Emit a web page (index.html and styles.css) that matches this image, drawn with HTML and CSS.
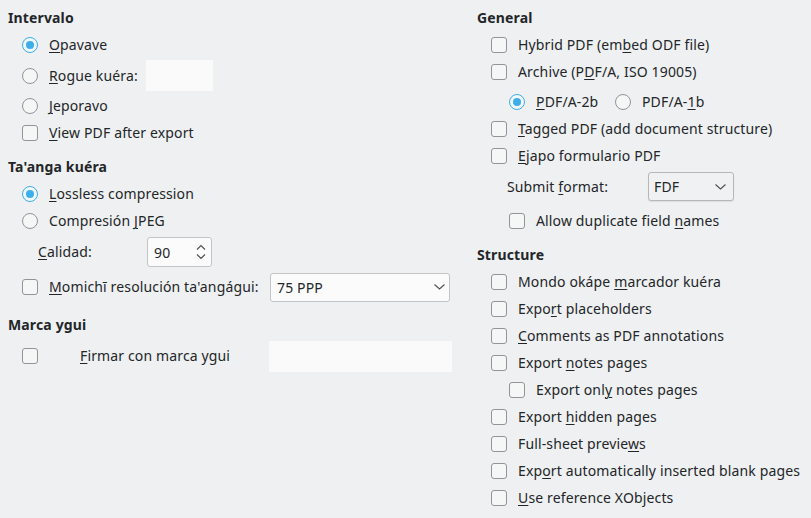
FILE: index.html
```html
<!DOCTYPE html>
<html>
<head>
<meta charset="utf-8">
<link rel="stylesheet" href="styles.css">
</head>
<body>
<div class="dialog">
  <div class="col">
    <section class="group">
      <div class="heading">Intervalo</div>
      <div class="row"><span class="radio checked"></span><span class="text"><u>O</u>pavave</span></div>
      <div class="row row-tall"><span class="radio"></span><span class="text w-rogue"><u>R</u>ogue kuéra:</span><span class="field field-pages"></span></div>
      <div class="row"><span class="radio"></span><span class="text"><u>J</u>eporavo</span></div>
      <div class="row"><span class="check"></span><span class="text"><u>V</u>iew PDF after export</span></div>
    </section>
    <section class="group">
      <div class="heading">Ta'anga kuéra</div>
      <div class="row"><span class="radio checked"></span><span class="text"><u>L</u>ossless compression</span></div>
      <div class="row"><span class="radio"></span><span class="text">Compresión <u>J</u>PEG</span></div>
      <div class="row row-ctl row-label"><span class="text w-calidad"><u>C</u>alidad:</span>
        <span class="spin"><span class="spin-val">90</span>
          <svg class="spin-arrows" width="10" height="16" viewBox="0 0 10 16"><path d="M1 5.5 L5 1.5 L9 5.5 M1 10.5 L5 14.5 L9 10.5" fill="none" stroke="#4d4f51" stroke-width="1.1"/></svg>
        </span>
      </div>
      <div class="row row-ctl"><span class="check"></span><span class="text w-momichi"><u>M</u>omichī resolución ta'angágui:</span>
        <span class="combo combo-res"><span class="combo-val">75 PPP</span>
          <svg class="chev" width="11" height="6" viewBox="0 0 11 6"><path d="M0.5 0.5 L5.5 5 L10.5 0.5" fill="none" stroke="#4d4f51" stroke-width="1.1"/></svg>
        </span>
      </div>
    </section>
    <section class="group">
      <div class="heading">Marca ygui</div>
      <div class="row row-wm"><span class="check"></span><span class="text w-firmar"><u>F</u>irmar con marca ygui</span><span class="field field-wm"></span></div>
    </section>
  </div>
  <div class="col">
    <section class="group">
      <div class="heading">General</div>
      <div class="row"><span class="check"></span><span class="text">Hybrid PDF (em<u>b</u>ed ODF file)</span></div>
      <div class="row"><span class="check"></span><span class="text">Archive (P<u>D</u>F/A, ISO 19005)</span></div>
      <div class="row row-sub row-pdfa"><span class="radio checked"></span><span class="text w-pdfa"><u>P</u>DF/A-2b</span><span class="radio"></span><span class="text">PDF/A-<u>1</u>b</span></div>
      <div class="row"><span class="check"></span><span class="text"><u>T</u>agged PDF (add document structure)</span></div>
      <div class="row"><span class="check"></span><span class="text"><u>E</u>japo formulario PDF</span></div>
      <div class="row row-label row-submit"><span class="text w-submit">Submit <u>f</u>ormat:</span>
        <span class="combo combo-btn"><span class="combo-val">FDF</span>
          <svg class="chev" width="11" height="6" viewBox="0 0 11 6"><path d="M0.5 0.5 L5.5 5 L10.5 0.5" fill="none" stroke="#4d4f51" stroke-width="1.1"/></svg>
        </span>
      </div>
      <div class="row row-sub row-allow"><span class="check"></span><span class="text">Allow duplicate field <u>n</u>ames</span></div>
    </section>
    <section class="group">
      <div class="heading">Structure</div>
      <div class="row"><span class="check"></span><span class="text">Mondo okápe <u>m</u>arcador kuéra</span></div>
      <div class="row"><span class="check"></span><span class="text">Expo<u>r</u>t placeholders</span></div>
      <div class="row"><span class="check"></span><span class="text"><u>C</u>omments as PDF annotations</span></div>
      <div class="row"><span class="check"></span><span class="text">Export <u>n</u>otes pages</span></div>
      <div class="row row-sub"><span class="check"></span><span class="text">Export onl<u>y</u> notes pages</span></div>
      <div class="row"><span class="check"></span><span class="text">Export <u>h</u>idden pages</span></div>
      <div class="row"><span class="check"></span><span class="text">Full-sheet previe<u>w</u>s</span></div>
      <div class="row"><span class="check"></span><span class="text">Exp<u>o</u>rt automatically inserted blank pages</span></div>
      <div class="row"><span class="check"></span><span class="text"><u>U</u>se reference XObjects</span></div>
    </section>
  </div>
</div>
</body>
</html>
```

FILE: styles.css
```css
html, body {
  margin: 0;
  padding: 0;
}
body {
  width: 811px;
  height: 518px;
  overflow: hidden;
  background: #eff0f1;
  color: #232629;
  font-family: "Noto Sans", "DejaVu Sans", sans-serif;
  font-size: 14px;
  letter-spacing: 0.14px;
}
.dialog {
  display: grid;
  grid-template-columns: 469px 342px;
  padding-top: 8px;
}
.col {
  display: flex;
  flex-direction: column;
}
.group + .group {
  margin-top: 10.5px;
}
.heading {
  height: 20px;
  line-height: 20px;
  margin: 0 0 3.5px 8px;
  font-weight: bold;
}
.row {
  display: flex;
  align-items: center;
  height: 27px;
  padding-left: 22px;
  white-space: nowrap;
}
.row-sub {
  padding-left: 40px;
}
.row-label {
  padding-left: 38px;
}
.row-tall {
  height: 34px;
}
.row-ctl {
  height: 35px;
}
.row-wm {
  height: 35px;
}
.row-pdfa {
  margin-top: 3px;
}
.row-submit {
  height: 34.5px;
}
.row-allow {
  margin-top: 3px;
}
.text {
  line-height: 20px;
}
.text u {
  text-decoration: underline;
  text-decoration-thickness: 1px;
  text-underline-offset: 2px;
}
.radio, .check {
  flex: 0 0 auto;
  box-sizing: border-box;
  width: 16px;
  height: 16px;
  margin-right: 11px;
  border: 1px solid #929496;
  background: #f5f6f6;
  position: relative;
}
.radio {
  border-radius: 50%;
}
.check {
  border-radius: 3px;
}
.radio.checked {
  border-color: #3daee9;
  background: #f2f9fd;
}
.radio.checked::after {
  content: "";
  position: absolute;
  left: 3px;
  top: 3px;
  width: 8px;
  height: 8px;
  border-radius: 50%;
  background: #3daee9;
}
.w-rogue { width: 97px; }
.w-calidad { width: 109px; }
.w-momichi { width: 221px; }
.w-firmar { width: 189px; margin-left: 31px; }
.w-submit { width: 141px; }
.w-pdfa { width: 79px; }
.field {
  display: block;
  height: 31px;
  background: #fafafa;
}
.field-pages {
  width: 67px;
}
.field-wm {
  width: 183px;
}
.spin {
  box-sizing: border-box;
  display: flex;
  align-items: center;
  justify-content: space-between;
  width: 65px;
  height: 30px;
  padding: 0 5px 0 6px;
  border: 1px solid #c2c4c6;
  border-radius: 3px;
  background: #fbfbfb;
}
.combo {
  box-sizing: border-box;
  display: flex;
  align-items: center;
  justify-content: space-between;
  height: 29px;
  border: 1px solid #c2c4c6;
  border-radius: 3px;
}
.combo-res {
  width: 180px;
  padding: 0 4px 0 6px;
  background: #fbfbfb;
}
.combo-btn {
  width: 86px;
  padding: 0 7px 0 5px;
  background: #f0f1f2;
  border-color: #b5b7b9;
  box-shadow: 0 1px 1px rgba(0, 0, 0, 0.08);
}
.chev {
  display: block;
}
.spin-arrows {
  display: block;
}
```
